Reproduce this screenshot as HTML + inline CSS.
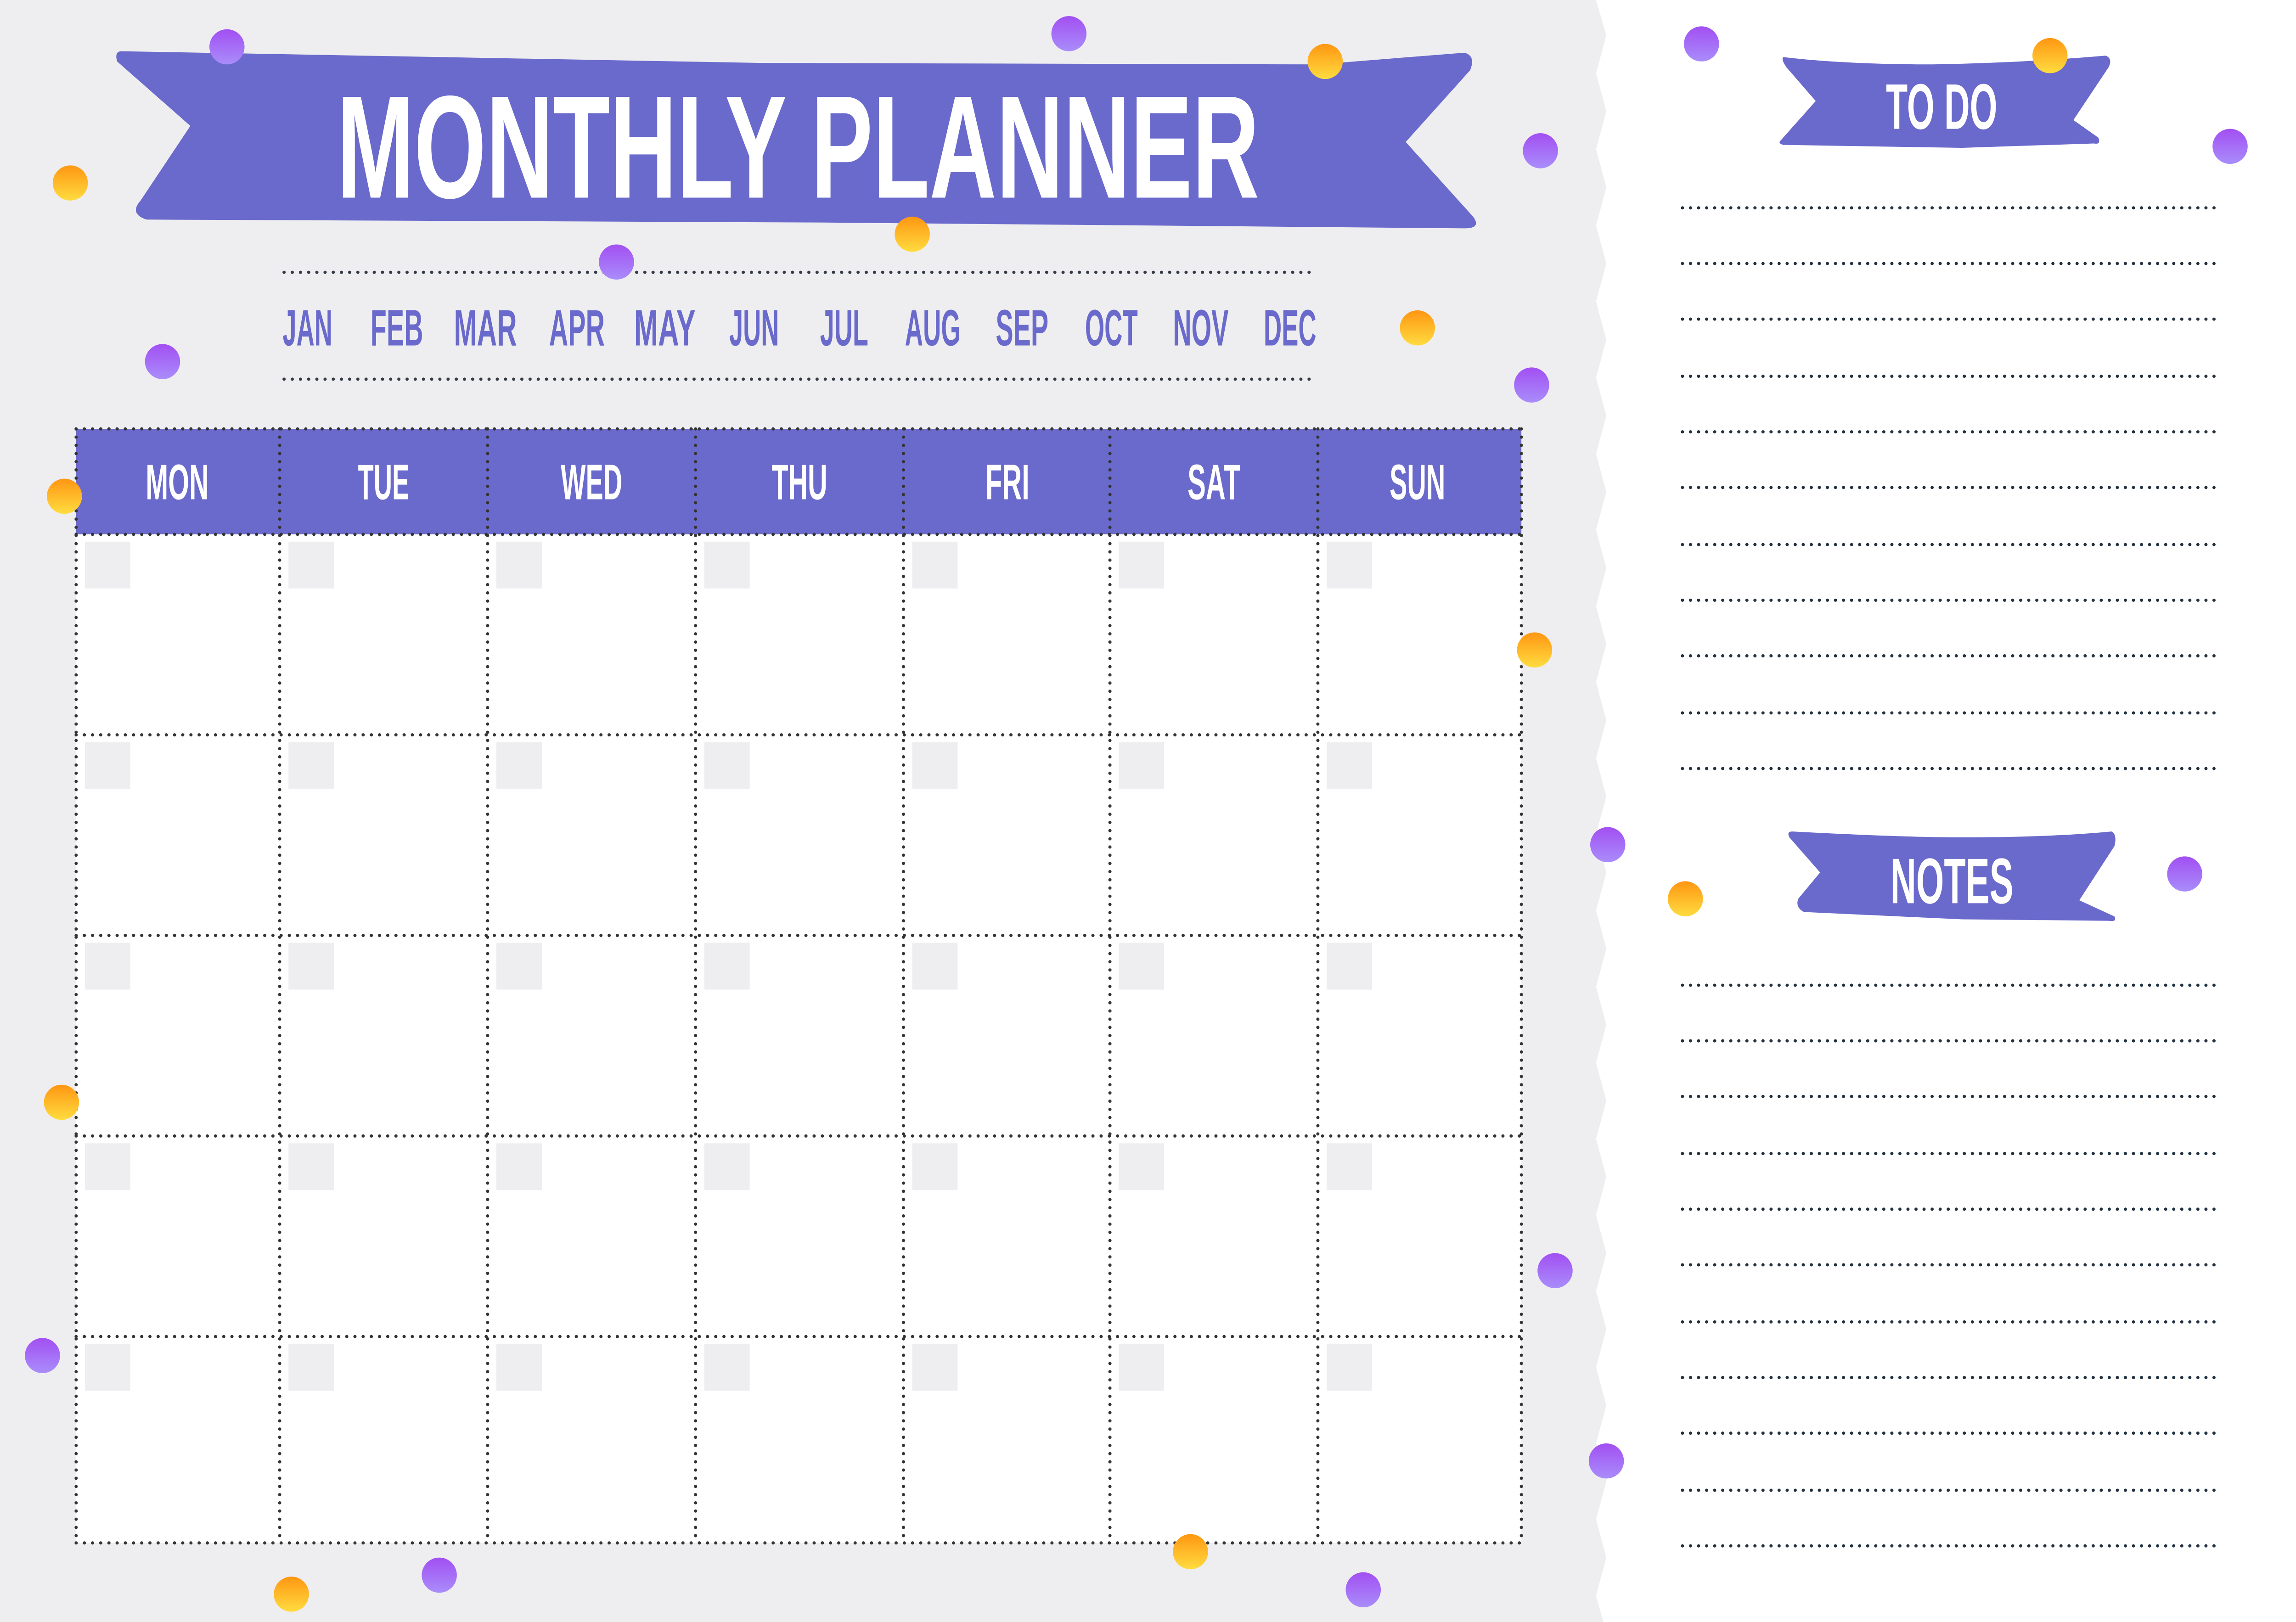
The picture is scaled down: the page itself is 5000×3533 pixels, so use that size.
<!DOCTYPE html>
<html><head><meta charset="utf-8"><style>
html,body{margin:0;padding:0;background:#fff}
svg{display:block}
text{font-family:"Liberation Sans Narrow","Liberation Sans",sans-serif;font-weight:bold}
</style></head><body>
<svg width="5000" height="3533" viewBox="0 0 1568 1108" preserveAspectRatio="none" xmlns="http://www.w3.org/2000/svg">
<defs>
<linearGradient id="pg" x1="0" y1="0" x2="0" y2="1"><stop offset="0" stop-color="#a24ff2"/><stop offset="1" stop-color="#a98dfb"/></linearGradient>
<linearGradient id="og" x1="0" y1="0" x2="0" y2="1"><stop offset="0" stop-color="#ff9612"/><stop offset="1" stop-color="#ffdc40"/></linearGradient>
</defs>
<rect width="1568" height="1108" fill="#fff"/>
<path fill="#eeeef0" d="M0 0 H1090 L1097 24 L1090 50 L1097 76 L1090 102 L1097 128 L1090 154 L1097 180 L1090 206 L1097 232 L1090 258 L1097 284 L1090 310 L1097 336 L1090 362 L1097 388 L1090 414 L1097 440 L1090 466 L1097 492 L1090 518 L1097 544 L1090 570 L1097 596 L1090 622 L1097 648 L1090 674 L1097 700 L1090 726 L1097 752 L1090 778 L1097 804 L1090 830 L1097 856 L1090 882 L1097 908 L1090 934 L1097 960 L1090 986 L1097 1012 L1090 1038 L1097 1064 L1090 1090 L1095 1108 H0 Z"/>
<path fill="#6a6acc" d="M83 35 L520 43 L900 44 L1000 36 Q1008 38 1004 48 L960 97 L1006 148 Q1012 156 1000 156 L560 152 L100 150 Q88 146 96 137 L130 86 L80 42 Q78 35 83 35 Z"/>
<text x="230" y="135" font-size="100" fill="#fff" textLength="630" lengthAdjust="spacingAndGlyphs">MONTHLY PLANNER</text>
<g stroke="#333a45" stroke-width="2.2" stroke-linecap="round" stroke-dasharray="0 5.6" fill="none">
<line x1="194" y1="186" x2="898" y2="186"/>
<line x1="194" y1="259" x2="898" y2="259"/>
</g>
<g fill="#6a6acc" font-size="35">
<text x="193" y="236" textLength="34" lengthAdjust="spacingAndGlyphs">JAN</text>
<text x="253" y="236" textLength="36" lengthAdjust="spacingAndGlyphs">FEB</text>
<text x="310" y="236" textLength="43" lengthAdjust="spacingAndGlyphs">MAR</text>
<text x="375" y="236" textLength="38" lengthAdjust="spacingAndGlyphs">APR</text>
<text x="433" y="236" textLength="42" lengthAdjust="spacingAndGlyphs">MAY</text>
<text x="498" y="236" textLength="34" lengthAdjust="spacingAndGlyphs">JUN</text>
<text x="560" y="236" textLength="33" lengthAdjust="spacingAndGlyphs">JUL</text>
<text x="618" y="236" textLength="38" lengthAdjust="spacingAndGlyphs">AUG</text>
<text x="680" y="236" textLength="36" lengthAdjust="spacingAndGlyphs">SEP</text>
<text x="741" y="236" textLength="36" lengthAdjust="spacingAndGlyphs">OCT</text>
<text x="801" y="236" textLength="38" lengthAdjust="spacingAndGlyphs">NOV</text>
<text x="863" y="236" textLength="36" lengthAdjust="spacingAndGlyphs">DEC</text>
</g>
<rect x="52" y="293" width="987" height="72" fill="#6a6acc"/>
<rect x="52" y="365" width="987" height="689" fill="#fff"/>
<g fill="#eeeef0">
<g id="r1">
<rect x="58" y="370" width="31" height="32"/><rect x="197" y="370" width="31" height="32"/><rect x="339" y="370" width="31" height="32"/><rect x="481" y="370" width="31" height="32"/><rect x="623" y="370" width="31" height="32"/><rect x="764" y="370" width="31" height="32"/><rect x="906" y="370" width="31" height="32"/>
</g>
<use href="#r1" y="137"/><use href="#r1" y="274"/><use href="#r1" y="411"/><use href="#r1" y="548"/>
</g>
<g stroke="#333" stroke-width="2.2" stroke-linecap="round" stroke-dasharray="0 5.6" fill="none">
<line x1="52" y1="293" x2="1039" y2="293"/>
<line x1="52" y1="365" x2="1039" y2="365"/>
<line x1="52" y1="502" x2="1039" y2="502"/>
<line x1="52" y1="639" x2="1039" y2="639"/>
<line x1="52" y1="776" x2="1039" y2="776"/>
<line x1="52" y1="913" x2="1039" y2="913"/>
<line x1="52" y1="1054" x2="1039" y2="1054"/>
<line x1="52" y1="293" x2="52" y2="1054"/>
<line x1="191" y1="293" x2="191" y2="1054"/>
<line x1="333" y1="293" x2="333" y2="1054"/>
<line x1="475" y1="293" x2="475" y2="1054"/>
<line x1="617" y1="293" x2="617" y2="1054"/>
<line x1="758" y1="293" x2="758" y2="1054"/>
<line x1="900" y1="293" x2="900" y2="1054"/>
<line x1="1039" y1="293" x2="1039" y2="1054"/>
</g>
<g fill="#fff" font-size="34" text-anchor="middle">
<text x="121" y="341" textLength="43" lengthAdjust="spacingAndGlyphs">MON</text>
<text x="262" y="341" textLength="35" lengthAdjust="spacingAndGlyphs">TUE</text>
<text x="404" y="341" textLength="42" lengthAdjust="spacingAndGlyphs">WED</text>
<text x="546" y="341" textLength="38" lengthAdjust="spacingAndGlyphs">THU</text>
<text x="688" y="341" textLength="30" lengthAdjust="spacingAndGlyphs">FRI</text>
<text x="829" y="341" textLength="36" lengthAdjust="spacingAndGlyphs">SAT</text>
<text x="968" y="341" textLength="38" lengthAdjust="spacingAndGlyphs">SUN</text>
</g>
<path fill="#6a6acc" d="M1218 39 Q1260 44 1320 44 Q1380 43 1438 38 Q1443 40 1440 46 L1416 82 L1433 94 Q1435 99 1430 98 L1340 101 L1218 99 Q1214 98 1216 96 L1240 69 L1220 46 Q1216 40 1218 39 Z"/>
<text x="1326" y="88" font-size="44" fill="#fff" text-anchor="middle" textLength="76" lengthAdjust="spacingAndGlyphs">TO DO</text>
<path fill="#6a6acc" d="M1224 568 Q1300 572 1340 572 Q1400 572 1442 568 Q1446 570 1444 578 L1420 615 L1444 626 Q1446 630 1440 629 L1340 628 L1232 623 Q1226 620 1228 614 L1243 596 L1222 572 Q1220 568 1224 568 Z"/>
<text x="1333" y="617" font-size="44" fill="#fff" text-anchor="middle" textLength="84" lengthAdjust="spacingAndGlyphs">NOTES</text>
<g stroke="#22313f" stroke-width="2.2" stroke-linecap="round" stroke-dasharray="0 5.5" fill="none">
<line x1="1149" y1="142" x2="1513" y2="142"/><line x1="1149" y1="180" x2="1513" y2="180"/><line x1="1149" y1="218" x2="1513" y2="218"/><line x1="1149" y1="257" x2="1513" y2="257"/><line x1="1149" y1="295" x2="1513" y2="295"/><line x1="1149" y1="333" x2="1513" y2="333"/><line x1="1149" y1="372" x2="1513" y2="372"/><line x1="1149" y1="410" x2="1513" y2="410"/><line x1="1149" y1="448" x2="1513" y2="448"/><line x1="1149" y1="487" x2="1513" y2="487"/><line x1="1149" y1="525" x2="1513" y2="525"/>
<line x1="1149" y1="673" x2="1513" y2="673"/><line x1="1149" y1="711" x2="1513" y2="711"/><line x1="1149" y1="749" x2="1513" y2="749"/><line x1="1149" y1="788" x2="1513" y2="788"/><line x1="1149" y1="826" x2="1513" y2="826"/><line x1="1149" y1="864" x2="1513" y2="864"/><line x1="1149" y1="903" x2="1513" y2="903"/><line x1="1149" y1="941" x2="1513" y2="941"/><line x1="1149" y1="979" x2="1513" y2="979"/><line x1="1149" y1="1018" x2="1513" y2="1018"/><line x1="1149" y1="1056" x2="1513" y2="1056"/>
</g>
<g fill="url(#pg)">
<circle cx="155" cy="32" r="12"/><circle cx="730" cy="23" r="12"/><circle cx="1052" cy="103" r="12"/><circle cx="111" cy="247" r="12"/><circle cx="421" cy="179" r="12"/><circle cx="1046" cy="263" r="12"/><circle cx="1098" cy="577" r="12"/><circle cx="1492" cy="597" r="12"/><circle cx="1162" cy="30" r="12"/><circle cx="1523" cy="100" r="12"/><circle cx="1062" cy="868" r="12"/><circle cx="29" cy="926" r="12"/><circle cx="1097" cy="998" r="12"/><circle cx="300" cy="1076" r="12"/><circle cx="931" cy="1086" r="12"/>
</g>
<g fill="url(#og)">
<circle cx="905" cy="42" r="12"/><circle cx="48" cy="125" r="12"/><circle cx="623" cy="160" r="12"/><circle cx="968" cy="224" r="12"/><circle cx="44" cy="339" r="12"/><circle cx="1048" cy="444" r="12"/><circle cx="1151" cy="614" r="12"/><circle cx="1400" cy="38" r="12"/><circle cx="42" cy="753" r="12"/><circle cx="813" cy="1060" r="12"/><circle cx="199" cy="1089" r="12"/>
</g>
</svg>
</body></html>
